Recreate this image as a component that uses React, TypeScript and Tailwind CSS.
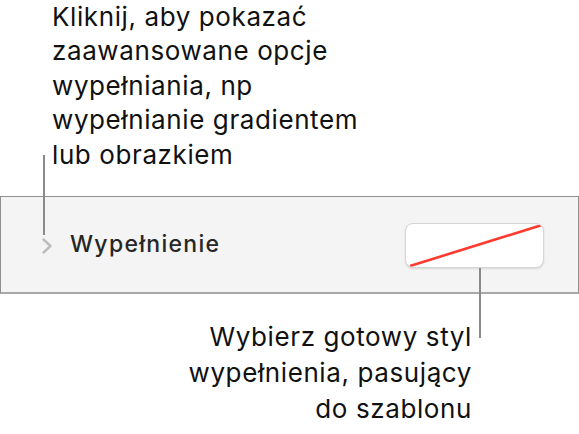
import React from "react";

const font = { fontFamily: "Inter, 'Noto Sans', sans-serif" };

function Chevron() {
  return (
    <svg width="12" height="18" viewBox="0 0 12 18" fill="none">
      <path d="M2.5 2.5l7 6.5-7 6.5" stroke="#bdbdbd" strokeWidth="2.4" strokeLinecap="round" strokeLinejoin="round" />
    </svg>
  );
}

function Swatch() {
  return (
    <div className="w-[139px] h-[45px] rounded-[8px] bg-white border border-[#d6d6d6] shadow-[0_1px_2px_rgba(0,0,0,0.12)] overflow-hidden">
      <svg width="139" height="45" viewBox="0 0 139 45">
        <line x1="4" y1="42" x2="136" y2="1" stroke="#ff3b30" strokeWidth="2.6" />
      </svg>
    </div>
  );
}

export default function App() {
  return (
    <div className="relative w-[579px] h-[434px] bg-white overflow-hidden" style={font}>
      {/* Top callout */}
      <div className="pl-[52px] text-[26px] tracking-[0.6px] leading-[34.4px] text-[#111]">
        <p>Kliknij, aby pokazać</p>
        <p>zaawansowane opcje</p>
        <p>wypełniania, np</p>
        <p>wypełnianie gradientem</p>
        <p>lub obrazkiem</p>
      </div>

      {/* Fill row */}
      <div className="mt-[24px] h-[98px] border border-[#8f8f8f] border-b-[#a8a8a8] border-b-2 bg-[#f4f4f4] flex items-center">
        <div className="pl-[40px] pt-[2px] flex items-center">
          <Chevron />
        </div>
        <span className="ml-[17px] text-[23px] tracking-[1.3px] font-medium text-[#262626]">Wypełnienie</span>
        <div className="ml-auto mr-[34px] mt-[1px]">
          <Swatch />
        </div>
      </div>

      {/* Bottom callout */}
      <div className="mt-[25px] pr-[107px] text-right text-[26px] tracking-[0.6px] leading-[35.8px] text-[#111]">
        <p>Wybierz gotowy styl</p>
        <p>wypełnienia, pasujący</p>
        <p>do szablonu</p>
      </div>

      {/* Leader lines */}
      <div className="absolute left-[43px] top-[155px] w-[2px] h-[80px] bg-[#8a8a8a]" />
      <div className="absolute left-[479px] top-[268px] w-[2px] h-[70px] bg-[#8a8a8a]" />
    </div>
  );
}
